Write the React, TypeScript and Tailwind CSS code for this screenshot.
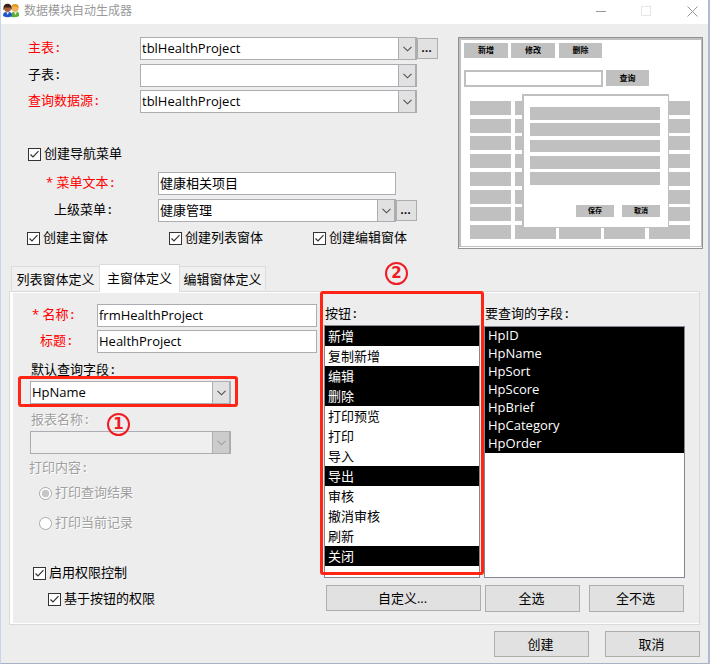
import React from 'react'
import clsx from 'clsx'

interface ListItem {
  label: string
  selected: boolean
}

const buttonItems: ListItem[] = [
  { label: '新增', selected: true },
  { label: '复制新增', selected: false },
  { label: '编辑', selected: true },
  { label: '删除', selected: true },
  { label: '打印预览', selected: false },
  { label: '打印', selected: false },
  { label: '导入', selected: false },
  { label: '导出', selected: true },
  { label: '审核', selected: false },
  { label: '撤消审核', selected: false },
  { label: '刷新', selected: false },
  { label: '关闭', selected: true }
]

const queryFields = ['HpID', 'HpName', 'HpSort', 'HpScore', 'HpBrief', 'HpCategory', 'HpOrder']

function Label({ text, className }: { text: string; className?: string }) {
  return (
    <span className={clsx('block shrink-0 whitespace-nowrap leading-[18px]', className)}>
      {text}
      <span className="ml-[2px] font-semibold">:</span>
    </span>
  )
}

function TextBox({ value, className }: { value: string; className?: string }) {
  return (
    <div className={clsx('flex h-[23px] shrink-0 items-center border border-[#abadb3] bg-white pl-px', className)}>
      <span className="pb-px leading-[18px]">{value}</span>
    </div>
  )
}

function ComboBox({ value, disabled, className }: { value?: string; disabled?: boolean; className?: string }) {
  return (
    <div
      className={clsx(
        'flex h-[23px] shrink-0 items-stretch justify-between border border-[#abadb3]',
        disabled ? 'bg-[#efefef]' : 'bg-white',
        className
      )}
    >
      <span className="flex items-center pb-px pl-px leading-[18px]">{value}</span>
      <span
        className={clsx(
          'flex w-[18px] items-center justify-center border border-y-0 border-[#abadb3]',
          disabled ? 'bg-[#cccccc]' : 'bg-[#e1e1e1]'
        )}
      >
        <svg width="9" height="6" viewBox="0 0 9 6" fill="none">
          <path d="M0.5 0.8L4.5 4.8L8.5 0.8" stroke={disabled ? '#a0a0a0' : '#505050'} strokeWidth="1.1" />
        </svg>
      </span>
    </div>
  )
}

function MoreButton() {
  return (
    <button className="flex h-[21px] w-[21px] shrink-0 items-center justify-center border border-[#adadad] bg-[#e1e1e1] pb-[3px] pr-[2px] font-semibold leading-none">
      ...
    </button>
  )
}

function PushButton({ children, className }: { children: React.ReactNode; className?: string }) {
  return (
    <button
      className={clsx(
        'flex shrink-0 items-center justify-center border border-[#adadad] bg-[#e1e1e1] pb-px pr-[2px]',
        className
      )}
    >
      {children}
    </button>
  )
}

function CheckBox({ label, className }: { label: string; className?: string }) {
  return (
    <div className={clsx('flex h-[18px] shrink-0 items-end', className)}>
      <svg width="13" height="13" viewBox="0 0 13 13" fill="none" className="shrink-0">
        <rect x="0.5" y="0.5" width="12" height="12" fill="white" stroke="#333333" />
        <path d="M2.5 6.5L5 9L10.5 3.2" stroke="#333333" strokeWidth="1.2" />
      </svg>
      <span className="-mb-px ml-[3px] whitespace-nowrap leading-[18px]">{label}</span>
    </div>
  )
}

function Radio({ label, checked, className }: { label: string; checked?: boolean; className?: string }) {
  return (
    <div className={clsx('flex h-[18px] items-end text-[#a0a0a0]', className)}>
      <svg width="13" height="13" viewBox="0 0 13 13" className="shrink-0">
        <circle cx="6.5" cy="6.5" r="6" fill="white" stroke="#a8a8a8" />
        {checked && <circle cx="6.5" cy="6.5" r="3.7" fill="#c6c6c6" />}
      </svg>
      <span className="-mb-px ml-[3px] whitespace-nowrap leading-[18px] [text-shadow:1px_1px_0_white]">{label}</span>
    </div>
  )
}

function StepMark({ value, className }: { value: string; className?: string }) {
  return (
    <div
      className={clsx(
        "absolute flex h-[23px] w-[23px] items-center justify-center rounded-full border-2 border-[#f01c24] font-['DejaVu_Sans',sans-serif] text-[15px] font-bold leading-none text-[#f01c24]",
        className
      )}
    >
      {value}
    </div>
  )
}

function TitleBar() {
  return (
    <div className="flex h-6 items-start bg-white pl-[2px] text-[12px] text-[#999999]">
      <svg width="17" height="15" viewBox="0 0 17 15" className="mt-[3px]">
        <path d="M8 14V11Q9 8 12 8.5Q16 8 16 11V13Q13 15 8 14Z" fill="#5fae3c" />
        <path d="M11 9L12.5 12L14 9Z" fill="#f4f0d0" />
        <circle cx="12" cy="5" r="3.6" fill="#f3b05c" />
        <path d="M8.3 5Q8 1 12 1Q16 1 15.6 5Q14 3 11 3.6Q9.5 4 8.3 5Z" fill="#e09a1c" />
        <path d="M0 13Q0 9 3 9H6Q9 9 9 13Q5 15.5 0 13Z" fill="#2456c8" />
        <path d="M3.2 9L4.7 12L6 9Z" fill="#dbe6fa" />
        <circle cx="4.6" cy="5.5" r="3.4" fill="#a8603c" />
        <path d="M0.6 7.5Q-0.4 0.8 4.6 0.8Q9.2 0.8 8.6 7L7.4 4.4Q4 4.8 2 4.2Z" fill="#3a201a" />
      </svg>
      <span className="ml-1 mt-px leading-5">数据模块自动生成器</span>
      <div className="ml-auto mr-[10px] mt-[6px] flex">
        <svg width="10" height="11" viewBox="0 0 10 11">
          <path d="M0 5.5H10" stroke="#999999" />
        </svg>
        <svg width="10" height="11" viewBox="0 0 10 11" fill="none" className="ml-[35px]">
          <rect x="0.5" y="0.5" width="9" height="9" stroke="#e6e6e6" />
        </svg>
        <svg width="11" height="11" viewBox="0 0 11 11" className="ml-9">
          <path d="M0.5 0.5L10.5 10.5M10.5 0.5L0.5 10.5" stroke="#999999" />
        </svg>
      </div>
    </div>
  )
}

function PreviewButton({ children, className }: { children: string; className: string }) {
  return (
    <div className={clsx('flex items-center justify-center bg-[#c0c0c0] pb-px font-bold leading-none', className)}>
      {children}
    </div>
  )
}

// Schematic thumbnail of the generated form
function Preview() {
  return (
    <div className="h-[212px] w-[245px] shrink-0 border border-[#929292] bg-white pb-px">
      <div className="relative h-full border border-l-2 border-t-2 border-[#c0c0c0] pl-[3px] pt-[3px] text-[8px]">
        <div className="flex">
          <PreviewButton className="h-[15px] w-11">新增</PreviewButton>
          <PreviewButton className="ml-[3px] h-[15px] w-11">修改</PreviewButton>
          <PreviewButton className="ml-1 h-[15px] w-[43px]">删除</PreviewButton>
        </div>
        <div className="mt-3 flex gap-[3px]">
          <div className="h-[17px] w-[139px] border-2 border-[#c0c0c0]" />
          <PreviewButton className="h-4 w-[43px]">查询</PreviewButton>
        </div>
        <div className="ml-[6px] mt-[14px] flex h-[138px] w-[220px] flex-col justify-between">
          {Array.from({ length: 8 }).map((_, row) => (
            <div key={row} className="flex h-[14px] justify-between">
              {Array.from({ length: 5 }).map((_, col) => (
                <div key={col} className="w-[41.4px] bg-[#c0c0c0]" />
              ))}
            </div>
          ))}
        </div>
        {/* Edit dialog floating over the list */}
        <div className="absolute left-[61px] top-[54px] h-[134px] w-[147px] border border-l-2 border-t-2 border-[#c0c0c0] bg-white pl-[6px] pr-2 pt-[11px] text-[7px]">
          <div className="flex h-[78px] flex-col justify-between">
            {Array.from({ length: 5 }).map((_, i) => (
              <div key={i} className="h-[12.6px] bg-[#c0c0c0]" />
            ))}
          </div>
          <div className="mt-5 flex justify-end gap-2">
            <PreviewButton className="h-3 w-[38px]">保存</PreviewButton>
            <PreviewButton className="h-3 w-[38px]">取消</PreviewButton>
          </div>
        </div>
      </div>
    </div>
  )
}

function SourceSettings() {
  return (
    <div className="w-[430px] shrink-0">
      <div className="flex h-[23px] items-center">
        <Label text="主表" className="w-28 pb-[3px] text-[#ff0000]" />
        <ComboBox value="tblHealthProject" className="w-[277px]" />
        <MoreButton />
      </div>
      <div className="mt-1 flex h-[23px] items-center">
        <Label text="子表" className="w-28 pb-[3px]" />
        <ComboBox className="w-[277px]" />
      </div>
      <div className="mt-[3px] flex h-[23px] items-center">
        <Label text="查询数据源" className="w-28 pb-[3px] text-[#ff0000]" />
        <ComboBox value="tblHealthProject" className="w-[277px]" />
      </div>
      <CheckBox label="创建导航菜单" className="mt-[30px]" />
      <div className="mt-[11px] flex h-[23px] items-center">
        <Label text="* 菜单文本" className="ml-[18px] w-28 pb-[3px] text-[#ff0000]" />
        <TextBox value="健康相关项目" className="w-[238px]" />
      </div>
      <div className="mt-1 flex h-[23px] items-center">
        <Label text="上级菜单" className="ml-[26px] w-[104px] pb-[3px]" />
        <ComboBox value="健康管理" className="w-[238px]" />
        <MoreButton />
      </div>
      <div className="-ml-px mt-[5px] flex">
        <CheckBox label="创建主窗体" className="w-[142px]" />
        <CheckBox label="创建列表窗体" className="w-36" />
        <CheckBox label="创建编辑窗体" />
      </div>
    </div>
  )
}

function Tabs() {
  return (
    <div className="ml-[2px] flex h-[27px] items-end">
      <div className="mb-px flex h-6 w-[88px] justify-center border border-b-0 border-r-0 border-[#dcdcdc] bg-[#f0f0f0] pt-[3px]">
        列表窗体定义
      </div>
      <div className="relative -mb-px flex h-[28px] w-[81px] justify-center border border-b-0 border-[#dcdcdc] bg-white pt-1">
        主窗体定义
      </div>
      <div className="mb-px flex h-6 w-[86px] justify-center border border-b-0 border-l-0 border-[#dcdcdc] bg-[#f0f0f0] pt-[3px]">
        编辑窗体定义
      </div>
    </div>
  )
}

function FormFields() {
  return (
    <div className="w-[311px] shrink-0 pl-[19px] pt-3">
      <div className="flex h-[23px] items-center">
        <Label text="* 名称" className="ml-[3px] w-[65px] pb-[3px] text-[#ff0000]" />
        <TextBox value="frmHealthProject" className="w-[220px]" />
      </div>
      <div className="mt-[3px] flex h-[23px] items-center">
        <Label text="标题" className="ml-[11px] w-[57px] pb-[3px] text-[#ff0000]" />
        <TextBox value="HealthProject" className="w-[220px]" />
      </div>
      <Label text="默认查询字段" className="ml-[2px] mt-[7px]" />
      <div className="relative ml-px mt-[3px] w-[201px]">
        <ComboBox value="HpName" className="w-[201px]" />
        <div className="absolute -left-3 -top-[5px] h-[31px] w-[220px] rounded-[3px] border-[3px] border-[#ff2414]" />
        <StepMark value="1" className="left-[77px] top-[32px]" />
      </div>
      <Label text="报表名称" className="ml-[2px] mt-[6px] text-[#a0a0a0] [text-shadow:1px_1px_0_white]" />
      <ComboBox disabled className="ml-px mt-[3px] w-[201px]" />
      <Label text="打印内容" className="mt-1 text-[#a0a0a0] [text-shadow:1px_1px_0_white]" />
      <Radio label="打印查询结果" checked className="ml-[10px] mt-[6px]" />
      <Radio label="打印当前记录" className="ml-[10px] mt-3" />
      <CheckBox label="启用权限控制" className="ml-1 mt-8" />
      <CheckBox label="基于按钮的权限" className="ml-[19px] mt-2" />
    </div>
  )
}

export default function App() {
  return (
    <div className="relative flex h-[664px] w-[710px] flex-col overflow-hidden border-b border-l border-r-2 border-b-[#a9b1c4] border-l-[#c9d5ea] border-r-[#adbad2] bg-[#ededed] font-['Open_Sans','Noto_Sans_CJK_SC',sans-serif] text-[13px] leading-[18px] text-black">
      <TitleBar />
      <div className="flex h-[240px] pl-[27px] pt-[13px]">
        <SourceSettings />
        <Preview />
      </div>

      <div className="pl-2">
        <Tabs />
        <div className="flex h-[334px] w-[691px] border border-[#dadada] shadow-[inset_3px_0_0_white,inset_0_1px_0_white,inset_0_-1px_0_white]">
          <FormFields />
          <div className="ml-[3px] w-[160px] shrink-0 pt-3">
            <Label text="按钮" className="ml-px" />
            <div className="mt-[3px] h-[253px] w-[156px] border border-[#828790] bg-white">
              {buttonItems.map((item) => (
                <div
                  key={item.label}
                  className={clsx('flex h-5 items-center pb-px pl-[3px]', item.selected && 'bg-black text-white')}
                >
                  {item.label}
                </div>
              ))}
            </div>
            <PushButton className="ml-[2px] mt-[7px] h-[26px] w-[155px]">自定义...</PushButton>
          </div>
          <div className="w-[201px] shrink-0 pt-3">
            <Label text="要查询的字段" className="ml-px" />
            <div className="mt-1 h-[252px] border border-[#828790] bg-white">
              {queryFields.map((field) => (
                <div key={field} className="h-[18px] bg-black pl-[3px] leading-4 text-white">
                  {field}
                </div>
              ))}
            </div>
            <div className="ml-px mt-[7px] flex gap-[9px]">
              <PushButton className="h-[27px] w-[95px]">全选</PushButton>
              <PushButton className="h-[27px] w-[95px]">全不选</PushButton>
            </div>
          </div>
        </div>
      </div>

      <div className="mr-2 mt-[6px] flex justify-end gap-4">
        <PushButton className="h-[26px] w-[95px]">创建</PushButton>
        <PushButton className="h-[26px] w-[95px]">取消</PushButton>
      </div>

      {/* Callouts */}
      <div className="absolute left-[319px] top-[291px] h-[284px] w-[164px] rounded-[3px] border-[3px] border-[#ff2414]" />
      <StepMark value="2" className="left-[384px] top-[262px]" />

      {/* Window resize handles */}
      <div className="absolute -right-[2px] top-[329px] h-[5px] w-[2px] border border-r-0 border-[#505050] bg-white" />
      <div className="absolute -bottom-px left-[352px] h-px w-[5px] bg-[#505050]" />
    </div>
  )
}
